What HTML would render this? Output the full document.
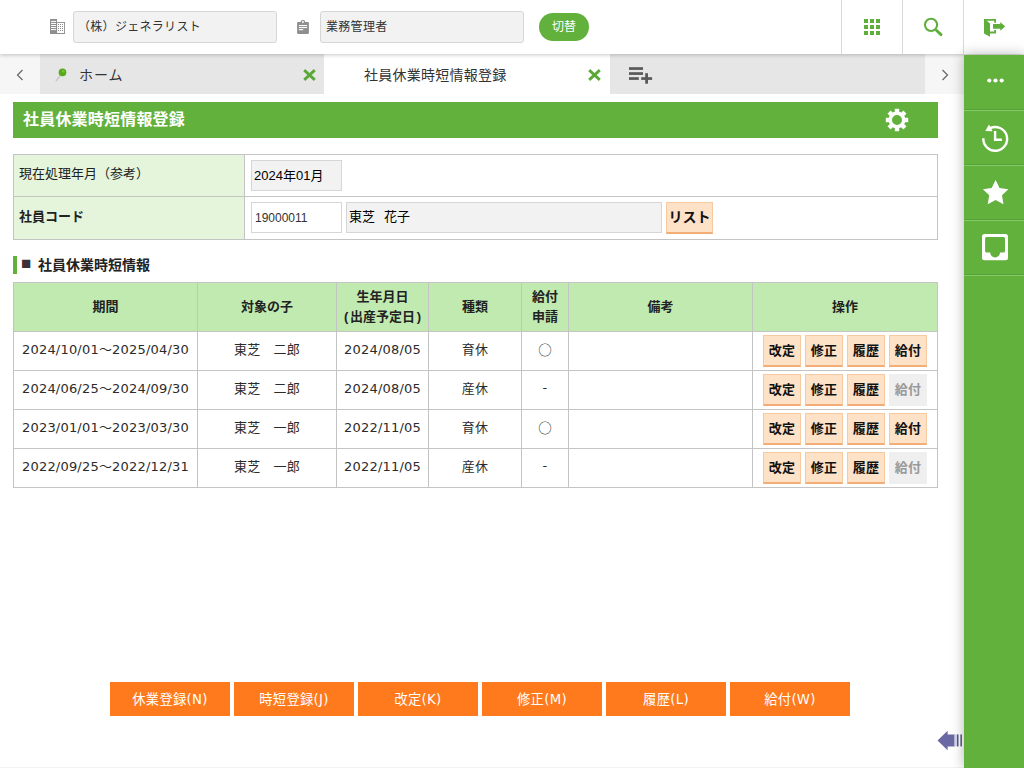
<!DOCTYPE html>
<html lang="ja">
<head>
<meta charset="utf-8">
<title>社員休業時短情報登録</title>
<style>
*{box-sizing:border-box;margin:0;padding:0}
html,body{width:1024px;height:768px;overflow:hidden;background:#fff}
body{font-family:"Liberation Sans","Noto Sans CJK JP",sans-serif;font-size:13px;color:#222;position:relative}
.abs{position:absolute}
/* header */
#hdr{position:absolute;left:0;top:0;width:1024px;height:54px;background:#fff;z-index:5;box-shadow:0 1px 4px rgba(0,0,0,.22)}
.hin{position:absolute;top:11px;height:32px;border:1px solid #d6d6d6;border-radius:3px;background:#f2f2f2;font-size:12px;line-height:30px;color:#333;white-space:nowrap;overflow:hidden}
#sw{position:absolute;left:539px;top:13px;width:50px;height:28px;border-radius:14px;background:#62b13c;color:#fff;font-size:12px;line-height:29px;text-align:center}
.vdiv{position:absolute;top:0;width:1px;height:54px;background:#d9d9d9}
/* tabs */
#tabs{position:absolute;left:0;top:54px;width:964px;height:40px;background:#e6e6e6}
#tabs .arrL{position:absolute;left:0;top:0;width:40px;height:40px;background:#f6f6f6}
#tabs .arrR{position:absolute;left:925px;top:0;width:39px;height:40px;background:#f6f6f6}
#tabs .act{position:absolute;left:324px;top:0;width:286px;height:40px;background:#fff}
.tabt{position:absolute;top:1px;height:40px;line-height:40px;font-size:14px;color:#333;white-space:nowrap}
/* sidebar */
#side{position:absolute;left:964px;top:55px;width:60px;height:713px;background:#62b13c;box-shadow:0 0 12px rgba(0,0,0,.3);z-index:6}
#side .sep{position:absolute;left:0;width:60px;height:2px;background:linear-gradient(#57a234 50%,#85ca6a 50%)}
/* title */
#ttl{position:absolute;left:13px;top:102px;width:925px;height:36px;background:#62b13c;color:#fff;font-weight:bold;font-size:16px;line-height:35px;padding-left:10px;letter-spacing:.2px}
/* form */
#frm{position:absolute;left:13px;top:154px;width:925px;height:86px;border:1px solid #c4c4c4}
#frm .lab{position:absolute;left:0;width:231px;background:#e4f5dc;border-right:1px solid #c4c4c4;font-size:13px;color:#222;padding-left:5px}
.inp{position:absolute;height:31px;border:1px solid #d6d6d6;font-size:12px;line-height:28px;color:#222;white-space:nowrap;overflow:hidden}
.sbtn{position:absolute;height:32px;background:#fde2c8;border:1px solid #f6c9a0;border-bottom:2px solid #f3ae78;color:#111;font-weight:bold;font-size:13px;text-align:center;line-height:29px;white-space:nowrap}
.sbtn.dis{background:#efefef;border-color:#efefef;color:#999}
/* section */
#sec{position:absolute;left:13px;top:256px;height:18px;width:300px;border-left:4px solid #62b13c;font-weight:bold;font-size:14px;line-height:17px;color:#222;white-space:nowrap}
#sec .sq{position:absolute;left:4px;top:-1px;font-size:17px;line-height:17px;color:#3a3035}
#sec .tx{position:absolute;left:21px;top:0.500px}
/* grid */
#grid{position:absolute;left:13px;top:282px;width:924px;border-collapse:collapse;table-layout:fixed}
#grid th,#grid td{border:1px solid #c4c4c4;text-align:center;font-size:13px;padding:0}
#grid th{background:#c1eab0;height:49px;font-weight:bold;line-height:20px;color:#222;padding-top:0;padding-bottom:1px}
#grid td{height:39px;color:#2b2b2b;position:relative;font-family:"DejaVu Sans","Noto Sans CJK JP",sans-serif;font-size:13px;padding-bottom:5px;letter-spacing:.2px}
#grid td.d{padding-bottom:3px}
#grid td .c{font-family:"Noto Sans CJK JP",sans-serif;font-size:13.500px;letter-spacing:0}
#grid td.d2{padding-bottom:5px}
/* bottom */
.bbtn{position:absolute;top:682px;width:120px;height:34px;background:#ff7a1c;color:#fff;font-family:"DejaVu Sans","Noto Sans CJK JP",sans-serif;font-size:13.300px;letter-spacing:.3px;text-align:center;line-height:35px;white-space:nowrap}
#bline{position:absolute;left:0;top:767px;width:964px;height:1px;background:#f3f3f3}
</style>
</head>
<body>
<div id="hdr">
  <svg class="abs" style="left:50px;top:19px" width="15" height="15" viewBox="0 0 15 15"><rect x="0" y="0" width="7" height="15" fill="#8e8e8e"/><rect x="7" y="3" width="8" height="12" fill="#8e8e8e"/><rect x="7.100" y="3.900" width="7" height="10.100" fill="#fff"/><g fill="#fff"><rect x="1" y="1.90" width="5" height="1"/><rect x="1" y="3.95" width="5" height="1"/><rect x="1" y="6.00" width="5" height="1"/><rect x="1" y="8.05" width="5" height="1"/><rect x="1" y="10.10" width="5" height="1"/></g><g fill="#8e8e8e"><rect x="8.0" y="5.0" width="1" height="1"/><rect x="8.0" y="7.0" width="1" height="1"/><rect x="8.0" y="9.0" width="1" height="1"/><rect x="8.0" y="11.0" width="1" height="1"/><rect x="10.0" y="5.0" width="1" height="1"/><rect x="10.0" y="7.0" width="1" height="1"/><rect x="10.0" y="9.0" width="1" height="1"/><rect x="10.0" y="11.0" width="1" height="1"/><rect x="12.0" y="5.0" width="1" height="1"/><rect x="12.0" y="7.0" width="1" height="1"/><rect x="12.0" y="9.0" width="1" height="1"/><rect x="12.0" y="11.0" width="1" height="1"/></g></svg>
  <div class="hin" style="left:73px;width:204px;padding-left:4px;letter-spacing:.3px">（株）ジェネラリスト</div>
  <svg class="abs" style="left:296px;top:19px" width="14" height="16" viewBox="0 0 14 16"><rect x="1.100" y="3.100" width="11.800" height="11.800" rx="0.800" fill="#8e8e8e"/><path d="M4.500 3.600V3.300A2.400 2.300 0 0 1 9.300 3.300V3.600z" fill="#8e8e8e"/><rect x="6" y="2.200" width="1.800" height="1.600" fill="#fff"/><rect x="2.900" y="6" width="8.200" height="1.100" fill="#fff"/><rect x="2.900" y="8" width="8.200" height="1.100" fill="#fff"/><rect x="2.900" y="10.100" width="4.300" height="1.100" fill="#fff"/></svg>
  <div class="hin" style="left:320px;width:204px;padding-left:5px;letter-spacing:.3px">業務管理者</div>
  <div id="sw">切替</div>
  <div class="vdiv" style="left:841px"></div>
  <div class="vdiv" style="left:902px"></div>
  <div class="vdiv" style="left:963px"></div>
  <svg class="abs" style="left:864px;top:19px" width="16" height="16" viewBox="0 0 16 16" fill="#5fae3b"><rect x="0" y="0" width="4" height="4"/><rect x="6" y="0" width="4" height="4"/><rect x="12" y="0" width="4" height="4"/><rect x="0" y="6" width="4" height="4"/><rect x="6" y="6" width="4" height="4"/><rect x="12" y="6" width="4" height="4"/><rect x="0" y="12" width="4" height="4"/><rect x="6" y="12" width="4" height="4"/><rect x="12" y="12" width="4" height="4"/></svg>
  <svg class="abs" style="left:923px;top:17px" width="21" height="20" viewBox="0 0 21 20"><circle cx="8.050" cy="7.850" r="6.100" fill="none" stroke="#5fae3b" stroke-width="2.100"/><path d="M13.600 13.500L18 17.600" stroke="#5fae3b" stroke-width="3" stroke-linecap="round"/></svg>
  <svg class="abs" style="left:983px;top:18px" width="23" height="20" viewBox="0 0 23 20" fill="#5fae3b"><path d="M1 1H13V4.800H11.200V2.800H1z"/><path d="M7 13.600H11.200V12H13V15.400H7z"/><path d="M1 1L3.800 2.800L7 5.400V18.800L1 15.400z"/><path d="M10 6H17.300V3.900L22.200 8.400L17.300 12.700V10.750H10z"/></svg>
</div>

<div id="tabs">
  <div class="arrL"></div>
  <svg class="abs" style="left:16px;top:15px" width="8" height="12" viewBox="0 0 8 12"><path d="M6.500 1L1.500 6l5 5" fill="none" stroke="#666" stroke-width="1.200"/></svg>
  <svg class="abs" style="left:55px;top:13px" width="13" height="15" viewBox="0 0 13 15"><path d="M1.200 13.800L5.500 8" stroke="#c6c6c6" stroke-width="1.400" stroke-linecap="round"/><circle cx="7.500" cy="5.400" r="3.800" fill="#58a91c"/><circle cx="8.300" cy="4.300" r="1.300" fill="#7cc43c"/></svg>
  <div class="tabt" style="left:79px;letter-spacing:1px">ホーム</div>
  <svg class="abs" style="left:303px;top:15px" width="13" height="12" viewBox="0 0 13 12"><path d="M1.200 1.100l10.600 9.800M11.800 1.100l-10.600 9.800" stroke="#5aa83a" stroke-width="2.800"/></svg>
  <div class="act"></div>
  <div class="tabt" style="left:364px;font-size:14px;letter-spacing:.25px">社員休業時短情報登録</div>
  <svg class="abs" style="left:588px;top:15px" width="13" height="12" viewBox="0 0 13 12"><path d="M1.200 1.100l10.600 9.800M11.800 1.100l-10.600 9.800" stroke="#5aa83a" stroke-width="2.800"/></svg>
  <svg class="abs" style="left:629px;top:12px" width="24" height="19" viewBox="0 0 24 19" fill="#595959"><rect x="0" y="1.200" width="14" height="2.700"/><rect x="0" y="6.200" width="14" height="2.700"/><rect x="0" y="11.200" width="9.800" height="2.700"/><rect x="12.200" y="11.200" width="10.900" height="2.700"/><rect x="16.200" y="7.200" width="2.800" height="10.500"/></svg>
  <div class="arrR"></div>
  <svg class="abs" style="left:941px;top:15px" width="8" height="12" viewBox="0 0 8 12"><path d="M1.500 1l5 5-5 5" fill="none" stroke="#666" stroke-width="1.200"/></svg>
</div>

<div id="side">
  <div class="sep" style="top:54px"></div>
  <div class="sep" style="top:109px"></div>
  <div class="sep" style="top:164px"></div>
  <div class="sep" style="top:219px"></div>
  <svg class="abs" style="left:23px;top:23px" width="17" height="5" viewBox="0 0 17 5" fill="#fff"><circle cx="2.300" cy="2.500" r="2.100"/><circle cx="8.500" cy="2.500" r="2.100"/><circle cx="14.700" cy="2.500" r="2.100"/></svg>
  <svg class="abs" style="left:16px;top:68px" width="30" height="30" viewBox="0 0 30 30"><path d="M10 5.200A11.900 11.900 0 1 1 3.350 15.300" fill="none" stroke="#fff" stroke-width="2.400"/><path d="M5.300 7.900L9 1.500L12.600 8.200z" fill="#fff"/><path d="M15.100 8.100V16.800H21.900" fill="none" stroke="#fff" stroke-width="2.400"/></svg>
  <svg class="abs" style="left:16px;top:123px" width="30" height="28" viewBox="0 0 30 28"><path d="M15.60 1.90L19.54 9.88L28.34 11.16L21.97 17.37L23.48 26.14L15.60 22.00L7.72 26.14L9.23 17.37L2.86 11.16L11.66 9.88z" fill="#fff"/></svg>
  <svg class="abs" style="left:18px;top:179px" width="26" height="27" viewBox="0 0 26 27"><path d="M2.500 0H23.500A2.500 2.500 0 0 1 26 2.500V23.700A2.500 2.500 0 0 1 23.500 26.200H2.500A2.500 2.500 0 0 1 0 23.700V2.500A2.500 2.500 0 0 1 2.500 0zM4.600 3A1.500 1.500 0 0 0 3.100 4.500V17A1.500 1.500 0 0 0 4.600 18.500H8.200A4.900 4.900 0 0 0 18 18.500H21.500A1.500 1.500 0 0 0 23 17V4.500A1.500 1.500 0 0 0 21.500 3z" fill="#fff" fill-rule="evenodd"/></svg>
</div>

<div id="ttl">社員休業時短情報登録</div>
<svg class="abs" style="left:885px;top:108px" width="24" height="24" viewBox="-12 -12 24 24" fill="#fff"><circle r="6.700" fill="none" stroke="#fff" stroke-width="3.400"/><rect x="-2.200" y="-11.200" width="4.400" height="4.500" transform="rotate(0)"/><rect x="-2.200" y="-11.200" width="4.400" height="4.500" transform="rotate(45)"/><rect x="-2.200" y="-11.200" width="4.400" height="4.500" transform="rotate(90)"/><rect x="-2.200" y="-11.200" width="4.400" height="4.500" transform="rotate(135)"/><rect x="-2.200" y="-11.200" width="4.400" height="4.500" transform="rotate(180)"/><rect x="-2.200" y="-11.200" width="4.400" height="4.500" transform="rotate(225)"/><rect x="-2.200" y="-11.200" width="4.400" height="4.500" transform="rotate(270)"/><rect x="-2.200" y="-11.200" width="4.400" height="4.500" transform="rotate(315)"/></svg>

<div id="frm">
  <div class="lab" style="top:0;height:41px;line-height:38px">現在処理年月（参考）</div>
  <div class="lab" style="top:41px;height:43px;line-height:40px;border-top:1px solid #c4c4c4;font-weight:bold">社員コード</div>
  <div class="abs" style="left:231px;top:41px;width:692px;height:1px;background:#c4c4c4"></div>
  <div class="inp" style="left:237px;top:5px;width:91px;background:#f2f2f2;padding-left:2px;font-size:13px;line-height:30px;color:#000">2024年01月</div>
  <div class="inp" style="left:237px;top:47px;width:91px;background:#fff;padding-left:3px;line-height:30px;color:#333">19000011</div>
  <div class="inp" style="left:332px;top:47px;width:316px;background:#f2f2f2;padding-left:2px;font-size:13px;color:#000">東芝<span style="display:inline-block;width:9px"></span>花子</div>
  <div class="sbtn" style="left:652px;top:47px;width:47px;font-size:14px">リスト</div>
</div>

<div id="sec"><span class="sq">■</span><span class="tx">社員休業時短情報</span></div>

<table id="grid">
<colgroup><col style="width:184px"><col style="width:139px"><col style="width:92px"><col style="width:93px"><col style="width:47px"><col style="width:184px"><col style="width:185px"></colgroup>
<tr><th>期間</th><th>対象の子</th><th>生年月日<br><span style="letter-spacing:1.700px">(</span>出産予定日<span style="margin-left:1.700px">)</span></th><th>種類</th><th>給付<br>申請</th><th>備考</th><th>操作</th></tr>
<tr><td>2024/10/01～2025/04/30</td><td>東芝&#x3000;二郎</td><td class="d">2024/08/05</td><td>育休</td><td><span class="c">○</span></td><td></td><td><div class="sbtn" style="left:10px;top:3px;width:38px">改定</div><div class="sbtn" style="left:52px;top:3px;width:38px">修正</div><div class="sbtn" style="left:94px;top:3px;width:38px">履歴</div><div class="sbtn" style="left:136px;top:3px;width:38px">給付</div></td></tr>
<tr><td>2024/06/25～2024/09/30</td><td>東芝&#x3000;二郎</td><td class="d">2024/08/05</td><td>産休</td><td class="d d2">-</td><td></td><td><div class="sbtn" style="left:10px;top:3px;width:38px">改定</div><div class="sbtn" style="left:52px;top:3px;width:38px">修正</div><div class="sbtn" style="left:94px;top:3px;width:38px">履歴</div><div class="sbtn dis" style="left:136px;top:3px;width:38px">給付</div></td></tr>
<tr><td>2023/01/01～2023/03/30</td><td>東芝&#x3000;一郎</td><td class="d">2022/11/05</td><td>育休</td><td><span class="c">○</span></td><td></td><td><div class="sbtn" style="left:10px;top:3px;width:38px">改定</div><div class="sbtn" style="left:52px;top:3px;width:38px">修正</div><div class="sbtn" style="left:94px;top:3px;width:38px">履歴</div><div class="sbtn" style="left:136px;top:3px;width:38px">給付</div></td></tr>
<tr><td>2022/09/25～2022/12/31</td><td>東芝&#x3000;一郎</td><td class="d">2022/11/05</td><td>産休</td><td class="d d2">-</td><td></td><td><div class="sbtn" style="left:10px;top:3px;width:38px">改定</div><div class="sbtn" style="left:52px;top:3px;width:38px">修正</div><div class="sbtn" style="left:94px;top:3px;width:38px">履歴</div><div class="sbtn dis" style="left:136px;top:3px;width:38px">給付</div></td></tr>
</table>

<div class="bbtn" style="left:110px">休業登録(N)</div>
<div class="bbtn" style="left:234px">時短登録(J)</div>
<div class="bbtn" style="left:358px">改定(K)</div>
<div class="bbtn" style="left:482px">修正(M)</div>
<div class="bbtn" style="left:606px">履歴(L)</div>
<div class="bbtn" style="left:730px">給付(W)</div>

<svg class="abs" style="left:937px;top:730px" width="26" height="21" viewBox="0 0 26 21"><path d="M0.500 10.500L10.600 0.700V4.400H17.600V16.400H10.600V20.200z" fill="#6a69a3"/><rect x="17.600" y="4.400" width="2.400" height="12" fill="#d4d4f0"/><rect x="20" y="4.400" width="1.500" height="12" fill="#55558a"/><rect x="23.400" y="4.400" width="1.500" height="12" fill="#55558a"/></svg>
<div id="bline"></div>
</body>
</html>
